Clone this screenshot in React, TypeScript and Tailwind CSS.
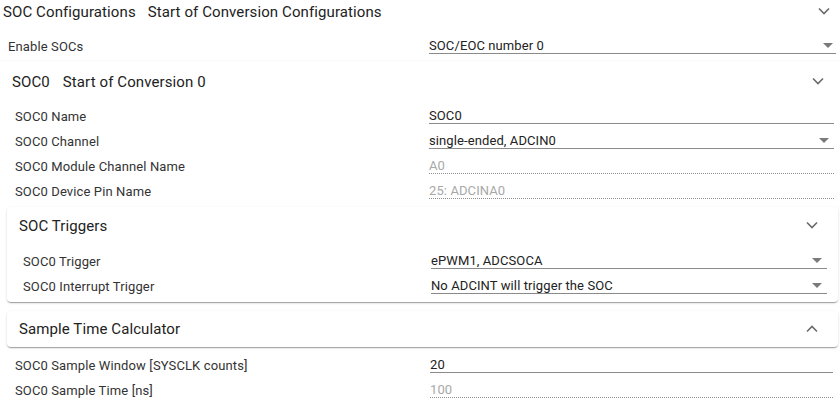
import React from "react";

type Kind = "select" | "text" | "disabled";

function Chevron({ up = false }: { up?: boolean }) {
  return (
    <svg width="12" height="8" viewBox="0 0 12 8" className="block">
      <polyline
        points={up ? "1,6.5 6,1.5 11,6.5" : "1,1.5 6,6.5 11,1.5"}
        fill="none"
        stroke="#6b6b6b"
        strokeWidth="1.6"
      />
    </svg>
  );
}

function Caret() {
  return (
    <svg width="10" height="5" viewBox="0 0 10 5" className="block">
      <polygon points="0,0 10,0 5,5" fill="#7a7a7a" />
    </svg>
  );
}

function Field({ value, kind, className }: { value: string; kind: Kind; className: string }) {
  const line =
    kind === "disabled"
      ? "border-b border-dotted border-[#8f8f8f] text-[#a8a8a8]"
      : "border-b border-[#8a8a8a] text-[#222]";
  return (
    <div className={`relative h-[15px] leading-[14px] text-[13px] tracking-[0.1px] ${line} ${className}`}>
      {value}
      {kind === "select" && (
        <span className="absolute right-[5px] top-[4px]">
          <Caret />
        </span>
      )}
    </div>
  );
}

function Row({
  label,
  value,
  kind,
  pad,
  field,
}: {
  label: string;
  value: string;
  kind: Kind;
  pad: string;
  field: string;
}) {
  return (
    <div className={`h-[25px] flex items-center ${pad}`}>
      <span className="flex-1 text-[13px] tracking-[0.12px] text-[#333]">{label}</span>
      <Field value={value} kind={kind} className={field} />
    </div>
  );
}

const socRows: { label: string; value: string; kind: Kind }[] = [
  { label: "SOC0 Name", value: "SOC0", kind: "text" },
  { label: "SOC0 Channel", value: "single-ended, ADCIN0", kind: "select" },
  { label: "SOC0 Module Channel Name", value: "A0", kind: "disabled" },
  { label: "SOC0 Device Pin Name", value: "25: ADCINA0", kind: "disabled" },
];

const triggerRows: { label: string; value: string; kind: Kind }[] = [
  { label: "SOC0 Trigger", value: "ePWM1, ADCSOCA", kind: "select" },
  { label: "SOC0 Interrupt Trigger", value: "No ADCINT will trigger the SOC", kind: "select" },
];

const sampleRows: { label: string; value: string; kind: Kind }[] = [
  { label: "SOC0 Sample Window [SYSCLK counts]", value: "20", kind: "text" },
  { label: "SOC0 Sample Time [ns]", value: "100", kind: "disabled" },
];

const card =
  "bg-white rounded-[4px] shadow-[0_2px_1px_-1px_rgba(0,0,0,0.2),0_1px_1px_0_rgba(0,0,0,0.14),0_1px_3px_0_rgba(0,0,0,0.12)]";

export default function App() {
  return (
    <div className="w-[840px] h-[404px] overflow-hidden bg-white font-['Roboto','Liberation_Sans',sans-serif] text-[#222]">
      {/* Top header */}
      <div className="h-[25px] flex items-center pl-[3px] pr-[10px] text-[15px] tracking-[0.1px]">
        <span>SOC Configurations</span>
        <span className="ml-[12px] flex-1">Start of Conversion Configurations</span>
        <span className="-mt-[3px]">
          <Chevron />
        </span>
      </div>
      <div className="h-[9px]" />
      <div className="h-[25px] flex items-center pl-[8px] pr-[4px]">
        <span className="flex-1 text-[13px] tracking-[0.12px] text-[#333]">Enable SOCs</span>
        <div className="relative w-[407px] h-[15px] leading-[14px] text-[13px] tracking-[0.1px] border-b border-[#8a8a8a] text-[#222]">
          SOC/EOC number 0
          <span className="absolute right-[3px] top-[4px]">
            <Caret />
          </span>
        </div>
      </div>

      {/* SOC0 panel */}
      <div className={`mt-[2px] pb-[20px] ${card} rounded-none`}>
        <div className="h-[43px] flex items-center pl-[12px] pr-[16px] text-[15px] tracking-[0.1px]">
          <span>SOC0</span>
          <span className="ml-[13px] flex-1">Start of Conversion 0</span>
          <span className="-mt-[4px]">
            <Chevron />
          </span>
        </div>

        {socRows.map((r) => (
          <Row key={r.label} {...r} pad="pl-[15px] pr-[6px]" field="w-[405px]" />
        ))}

        {/* SOC Triggers */}
        <div className={`mt-[3px] ml-[7px] mr-[2px] pb-[3px] ${card}`}>
          <div className="h-[38px] flex items-center pl-[12px] pr-[20px]">
            <span className="text-[15px] tracking-[0.1px] flex-1">SOC Triggers</span>
            <span className="-mt-[2px]">
              <Chevron />
            </span>
          </div>
          <div className="mt-[4px]">
            {triggerRows.map((r) => (
              <Row key={r.label} {...r} pad="pl-[16px] pr-[11px]" field="w-[396px]" />
            ))}
          </div>
        </div>

        {/* Sample Time Calculator */}
        <div className={`mt-[9px] ml-[7px] mr-[2px] ${card}`}>
          <div className="h-[36px] flex items-center pl-[12px] pr-[20px]">
            <span className="text-[15px] tracking-[0.1px] flex-1">Sample Time Calculator</span>
            <span className="-mt-[1px]">
              <Chevron up />
            </span>
          </div>
        </div>

        <div className="mt-[6px]">
          {sampleRows.map((r) => (
            <Row key={r.label} {...r} pad="pl-[15px] pr-[7px]" field="w-[403px]" />
          ))}
        </div>
      </div>
    </div>
  );
}
